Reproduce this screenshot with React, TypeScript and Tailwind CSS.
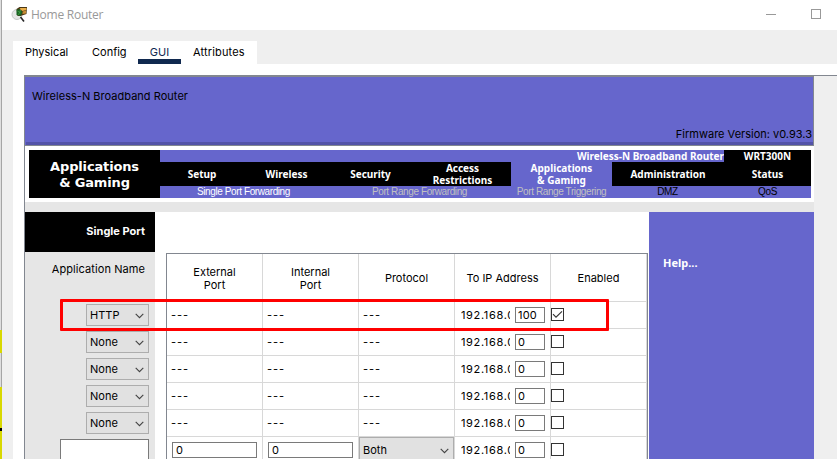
import type { ReactNode } from "react";

const UI = "font-['Inter','Liberation_Sans',sans-serif]";

function Chevron() {
  return (
    <svg width="9" height="6" viewBox="0 0 9 6" fill="none" className="mt-px shrink-0">
      <path d="M0.7 0.8L4.5 4.6L8.3 0.8" stroke="#444" strokeWidth="1.1" />
    </svg>
  );
}

function Select({ label, className }: { label: string; className: string }) {
  return (
    <div className={`flex shrink-0 items-center justify-between border border-[#adadad] bg-[#e1e1e1] pr-1 pl-[3px] ${className}`}>
      <span>{label}</span>
      <Chevron />
    </div>
  );
}

function Field({ value, className }: { value: string; className: string }) {
  return (
    <div className={`flex h-4 shrink-0 items-center border border-[#7a7a7a] bg-white ${className}`}>{value}</div>
  );
}

function Check({ on }: { on: boolean }) {
  return (
    <div className="flex h-[13px] w-[13px] items-center justify-center border border-[#333] bg-white">
      {on && (
        <svg width="11" height="11" viewBox="0 0 11 11" fill="none">
          <path d="M1 5.2L4 8.2L10 2.3" stroke="#333" strokeWidth="1.1" />
        </svg>
      )}
    </div>
  );
}

function Cell({ children, className = "" }: { children?: ReactNode; className?: string }) {
  return <div className={`flex w-24 shrink-0 items-center border-r border-b border-[#d8d8d8] ${className}`}>{children}</div>;
}

const menu = [
  { name: ["Setup"], cls: "w-[84px] bg-black" },
  { name: ["Wireless"], cls: "w-[85px] bg-black" },
  { name: ["Security"], cls: "w-[83px] bg-black" },
  { name: ["Access", "Restrictions"], cls: "w-[99px] bg-black pl-[2px]" },
  { name: ["Applications", "& Gaming"], cls: "w-[101px]" },
  { name: ["Administration"], cls: "w-[112px] bg-black" },
  { name: ["Status"], cls: "w-[87px] bg-black" },
];

const submenu = [
  { name: "Single Port Forwarding", cls: "w-[167px] text-white" },
  { name: "Port Range Forwarding", cls: "w-[185px] text-[#c0c0c0]" },
  { name: "Port Range Triggering", cls: "w-[99px] text-[#c0c0c0]" },
  { name: "DMZ", cls: "w-[113px] text-black" },
  { name: "QoS", cls: "w-[87px] text-black" },
];

const rows = [
  { app: "HTTP", ip: "100", on: true },
  { app: "None", ip: "0", on: false },
  { app: "None", ip: "0", on: false },
  { app: "None", ip: "0", on: false },
  { app: "None", ip: "0", on: false },
];

function IpCell({ value }: { value: string }) {
  return (
    <Cell className="pl-[6px]">
      <span className="w-[49px] overflow-hidden tracking-[0.65px] whitespace-nowrap">192.168.0</span>
      <Field value={value} className="ml-[5px] w-[30px] pl-[2px] tracking-[0.2px]" />
    </Cell>
  );
}

function EnabledCell({ on }: { on: boolean }) {
  return (
    <Cell className="pb-[2px]">
      <Check on={on} />
    </Cell>
  );
}

function TitleBar() {
  return (
    <div className="flex h-[30px] items-center bg-white pl-2">
      <svg width="20" height="16" viewBox="-1.5 0 20 16" className="shrink-0">
        <circle cx="5.5" cy="7.5" r="5" fill="#e4e6e5" stroke="#c3c7c5" strokeWidth="1" />
        <path d="M5 2L8 0H15.5L15 7L9 9L6 9Z" fill="#493714" />
        <path d="M9 1H15V3L11 4L8 2Z" fill="#e9ad48" />
        <path d="M11 4.5L14.5 3.5V6.5L11 7Z" fill="#c68d35" />
        <path d="M5 3L8 2L11 5L9 9L5 8Z" fill="#176322" />
        <path d="M6 4L9 6M9 3L7 8" stroke="#3c9b43" strokeWidth="1" />
        <path d="M9 10L12.5 14.5" stroke="#292929" strokeWidth="1.6" />
      </svg>
      <span className="ml-px font-['Open_Sans','Noto_Sans',sans-serif] text-[12px] tracking-[-0.25px] text-[#999]">Home Router</span>
      <div className="mr-4 mb-[2px] ml-auto flex items-center gap-[35px]">
        <div className="h-px w-[10px] bg-[#999]" />
        <div className="h-[10px] w-[10px] border border-[#999]" />
      </div>
    </div>
  );
}

function NavBar() {
  return (
    <div className="flex h-14 shrink-0 bg-white pt-1 pb-1 pl-1">
      <div className="flex h-12 w-[131px] flex-col items-center justify-center bg-black pt-[2px] font-['DejaVu_Sans',sans-serif] text-[13px] leading-4 font-bold tracking-[-0.15px] text-white">
        <span>Applications</span>
        <span>&amp; Gaming</span>
      </div>
      <div className="w-[651px] bg-[#6666cc]">
        <div className="flex h-3 font-['Noto_Sans',sans-serif] text-[10px] leading-[13px] font-bold text-white">
          <div className="h-3 w-[564px] text-right">Wireless-N Broadband Router</div>
          <div className="h-3 w-[87px] bg-black text-center">WRT300N</div>
        </div>
        <div className="flex h-6 font-['Noto_Sans',sans-serif] text-[10px] leading-3 font-bold text-white">
          {menu.map((m) => (
            <div key={m.name[0]} className={`flex flex-col items-center justify-center ${m.cls}`}>
              {m.name.map((line) => (
                <span key={line}>{line}</span>
              ))}
            </div>
          ))}
        </div>
        <div className="flex h-3 font-['Liberation_Sans',sans-serif] text-[10px] leading-3 tracking-[-0.4px]">
          {submenu.map((s) => (
            <div key={s.name} className={`text-center whitespace-nowrap ${s.cls}`}>
              {s.name}
            </div>
          ))}
        </div>
      </div>
    </div>
  );
}

function Sidebar() {
  return (
    <div className="w-[130px] shrink-0 bg-[#e6e6e6]">
      <div className="h-10 bg-black pt-[11px] pr-[10px] text-right font-['Inter',sans-serif] text-[11px] leading-4 font-bold text-white">
        Single Port
      </div>
      <div className="h-[52px] pt-[9px] pr-[10px] text-right leading-4 tracking-[0.08px]">Application Name</div>
      <div className="flex flex-col items-end gap-[5px] pr-[6px]">
        {rows.map((r, i) => (
          <Select key={i} label={r.app} className="h-[22px] w-[63px]" />
        ))}
        <div className="h-[22px] w-[89px] border border-[#7a7a7a] bg-white" />
      </div>
    </div>
  );
}

function PortTable() {
  return (
    <div className="mt-[41px] ml-[11px] h-[230px] w-[482px] shrink-0 overflow-hidden border border-[#828790] bg-white">
      <div className="flex h-12 text-center leading-[13px]">
        <Cell className="justify-center pt-[2px]">External<br />Port</Cell>
        <Cell className="justify-center pt-[2px]">Internal<br />Port</Cell>
        <Cell className="justify-center pt-[2px]">Protocol</Cell>
        <Cell className="justify-center pt-[2px]">To IP Address</Cell>
        <Cell className="justify-center pt-[2px]">Enabled</Cell>
      </div>
      {rows.map((r, i) => (
        <div key={i} className="flex h-[27px]">
          {[0, 1, 2].map((c) => (
            <Cell key={c} className="pl-[4px] tracking-[0.9px]">---</Cell>
          ))}
          <IpCell value={r.ip} />
          <EnabledCell on={r.on} />
        </div>
      ))}
      <div className="flex h-[27px]">
        <Cell className="pl-[5px]">
          <Field value="0" className="w-[85px] pl-[3px]" />
        </Cell>
        <Cell className="pl-[5px]">
          <Field value="0" className="w-[85px] pl-[3px]" />
        </Cell>
        <Cell>
          <Select label="Both" className="h-[26px] w-[95px]" />
        </Cell>
        <IpCell value="0" />
        <EnabledCell on={false} />
      </div>
    </div>
  );
}

export default function App() {
  return (
    <div className={`relative flex h-[459px] w-[837px] overflow-hidden bg-[#efefef] text-[11px] text-black ${UI}`}>
      <div className="flex w-[2px] shrink-0 flex-col border-r border-[#a5a5a5] bg-[#dedede]">
        <div className="h-[330px]" />
        <div className="-mr-px h-[23px] bg-[#d8d800]" />
        <div className="h-[34px]" />
        <div className="-mr-px h-[41px] bg-[#d8d800]" />
        <div className="-mr-px h-[3px] bg-black" />
        <div className="-mr-px h-[28px] bg-[#d8d800]" />
      </div>
      <div className="flex w-[835px] flex-col">
        <TitleBar />
        <div className="mt-[11px] ml-[11px] flex h-[23px] w-[244px] shrink-0 bg-white pl-3 leading-[22px]">
          <div className="w-[67px]">Physical</div>
          <div className="w-[46px]">Config</div>
          <div className="w-[43px] border-b-[5px] border-[#10294f] text-center text-[#10294f]">GUI</div>
          <div className="pl-3 tracking-[0.15px]">Attributes</div>
        </div>
        <div className="ml-[11px] flex h-[395px] bg-white pt-[11px] pl-[11px]">
          <div className="flex h-[384px] w-[813px] border-t border-l border-[#828790] bg-[#efefef]">
            <div className="w-[789px] shrink-0">
              <div className="flex h-[70px] flex-col justify-between border-t border-r border-b border-[#828790] bg-[#6666cc] pl-[1px]">
                <div className="pt-[11px] pl-[6px] leading-4 tracking-[0.03px]">Wireless-N Broadband Router</div>
                <div className="border-b-[3px] border-[#5353a8] pr-[1px] text-right leading-4">Firmware Version: v0.93.3</div>
              </div>
              <NavBar />
              <div className="h-[10px] bg-[#e6e6e6]" />
              <div className="flex h-[247px] bg-white">
                <Sidebar />
                <PortTable />
                <div className="ml-px flex-1 bg-[#6666cc] pt-[43px] pl-[14px] font-['Noto_Sans',sans-serif] text-[11px] leading-4 font-bold text-white">
                  Help...
                </div>
              </div>
            </div>
          </div>
        </div>
      </div>
      <div className="absolute top-[299px] left-[60px] h-8 w-[549px] rounded-[1px] border-[3px] border-[#ff0000]" />
    </div>
  );
}
